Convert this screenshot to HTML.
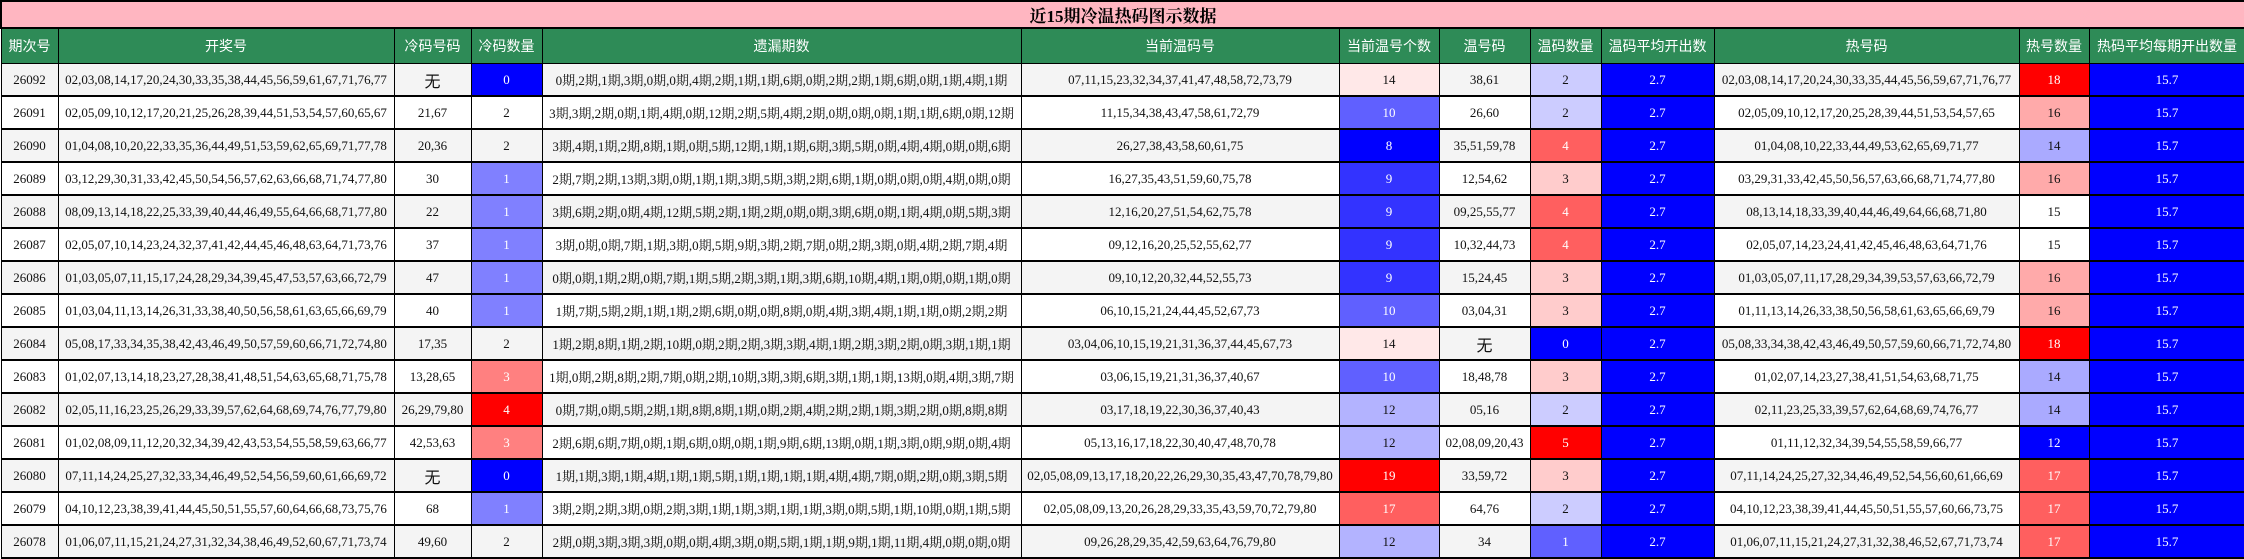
<!DOCTYPE html>
<html><head><meta charset="utf-8">
<style>
html,body{margin:0;padding:0;background:#fff;}
body{width:2244px;height:558px;overflow:hidden;}
table{border-collapse:collapse;table-layout:fixed;width:2244px;}
td{border:1px solid #000;text-align:center;vertical-align:middle;padding:0;white-space:nowrap;overflow:hidden;
 font-family:"Liberation Serif","Noto Serif CJK SC","Noto Sans CJK SC",serif;font-size:13px;color:#111;}
tr.t td{height:24px;background:#FFB6C1;border:2px solid #000;font-weight:bold;font-size:17px;color:#000;}
tr.h td{height:34px;background:#2E8B57;color:#fff;font-family:"Noto Sans CJK SC","Liberation Sans",sans-serif;font-size:14px;}
tr.r td{height:31px;border-bottom:2px solid #000;}
tr.r:nth-of-type(odd) td{background:#f4f4f4;}
tr.r:nth-of-type(even) td{background:#fff;}
tr.r td.w{font-family:"Noto Sans CJK SC",sans-serif;font-size:16px;}
tr.r td.b0{background:#0000ff;color:#fff;}
tr.r td.b1{background:#8080ff;color:#fff;}
tr.r td.b2{background:#6060ff;color:#fff;}
tr.r td.b3{background:#3333ff;color:#fff;}
tr.r td.l1{background:#ccccff;}
tr.r td.l2{background:#b3b3ff;}
tr.r td.l3{background:#aaaaff;}
tr.r td.p0{background:#ffe8e8;}
tr.r td.p1{background:#ffcccc;}
tr.r td.p2{background:#ffaaaa;}
tr.r td.p3{background:#ff8080;color:#fff;}
tr.r td.p4{background:#ff5f5f;color:#fff;}
tr.r td.rd{background:#ff0000;color:#fff;}
</style></head><body>
<table>
<colgroup>
<col style="width:57px"><col style="width:336px"><col style="width:77px"><col style="width:71px"><col style="width:479px"><col style="width:318px"><col style="width:100px"><col style="width:91px"><col style="width:71px"><col style="width:113px"><col style="width:305px"><col style="width:70px"><col style="width:156px">
</colgroup>
<tr class="t"><td colspan="13">近15期冷温热码图示数据</td></tr>
<tr class="h"><td>期次号</td><td>开奖号</td><td>冷码号码</td><td>冷码数量</td><td>遗漏期数</td><td>当前温码号</td><td>当前温号个数</td><td>温号码</td><td>温码数量</td><td>温码平均开出数</td><td>热号码</td><td>热号数量</td><td>热码平均每期开出数量</td></tr>
<tr class="r"><td>26092</td><td>02,03,08,14,17,20,24,30,33,35,38,44,45,56,59,61,67,71,76,77</td><td class="w">无</td><td class="b0">0</td><td>0期,2期,1期,3期,0期,0期,4期,2期,1期,1期,6期,0期,2期,2期,1期,6期,0期,1期,4期,1期</td><td>07,11,15,23,32,34,37,41,47,48,58,72,73,79</td><td class="p0">14</td><td>38,61</td><td class="l1">2</td><td class="b0">2.7</td><td>02,03,08,14,17,20,24,30,33,35,44,45,56,59,67,71,76,77</td><td class="rd">18</td><td class="b0">15.7</td></tr>
<tr class="r"><td>26091</td><td>02,05,09,10,12,17,20,21,25,26,28,39,44,51,53,54,57,60,65,67</td><td>21,67</td><td>2</td><td>3期,3期,2期,0期,1期,4期,0期,12期,2期,5期,4期,2期,0期,0期,0期,1期,1期,6期,0期,12期</td><td>11,15,34,38,43,47,58,61,72,79</td><td class="b2">10</td><td>26,60</td><td class="l1">2</td><td class="b0">2.7</td><td>02,05,09,10,12,17,20,25,28,39,44,51,53,54,57,65</td><td class="p2">16</td><td class="b0">15.7</td></tr>
<tr class="r"><td>26090</td><td>01,04,08,10,20,22,33,35,36,44,49,51,53,59,62,65,69,71,77,78</td><td>20,36</td><td>2</td><td>3期,4期,1期,2期,8期,1期,0期,5期,12期,1期,1期,6期,3期,5期,0期,4期,4期,0期,0期,6期</td><td>26,27,38,43,58,60,61,75</td><td class="b0">8</td><td>35,51,59,78</td><td class="p4">4</td><td class="b0">2.7</td><td>01,04,08,10,22,33,44,49,53,62,65,69,71,77</td><td class="l3">14</td><td class="b0">15.7</td></tr>
<tr class="r"><td>26089</td><td>03,12,29,30,31,33,42,45,50,54,56,57,62,63,66,68,71,74,77,80</td><td>30</td><td class="b1">1</td><td>2期,7期,2期,13期,3期,0期,1期,1期,3期,5期,3期,2期,6期,1期,0期,0期,0期,4期,0期,0期</td><td>16,27,35,43,51,59,60,75,78</td><td class="b3">9</td><td>12,54,62</td><td class="p1">3</td><td class="b0">2.7</td><td>03,29,31,33,42,45,50,56,57,63,66,68,71,74,77,80</td><td class="p2">16</td><td class="b0">15.7</td></tr>
<tr class="r"><td>26088</td><td>08,09,13,14,18,22,25,33,39,40,44,46,49,55,64,66,68,71,77,80</td><td>22</td><td class="b1">1</td><td>3期,6期,2期,0期,4期,12期,5期,2期,1期,2期,0期,0期,3期,6期,0期,1期,4期,0期,5期,3期</td><td>12,16,20,27,51,54,62,75,78</td><td class="b3">9</td><td>09,25,55,77</td><td class="p4">4</td><td class="b0">2.7</td><td>08,13,14,18,33,39,40,44,46,49,64,66,68,71,80</td><td style="background:#fff">15</td><td class="b0">15.7</td></tr>
<tr class="r"><td>26087</td><td>02,05,07,10,14,23,24,32,37,41,42,44,45,46,48,63,64,71,73,76</td><td>37</td><td class="b1">1</td><td>3期,0期,0期,7期,1期,3期,0期,5期,9期,3期,2期,7期,0期,2期,3期,0期,4期,2期,7期,4期</td><td>09,12,16,20,25,52,55,62,77</td><td class="b3">9</td><td>10,32,44,73</td><td class="p4">4</td><td class="b0">2.7</td><td>02,05,07,14,23,24,41,42,45,46,48,63,64,71,76</td><td>15</td><td class="b0">15.7</td></tr>
<tr class="r"><td>26086</td><td>01,03,05,07,11,15,17,24,28,29,34,39,45,47,53,57,63,66,72,79</td><td>47</td><td class="b1">1</td><td>0期,0期,1期,2期,0期,7期,1期,5期,2期,3期,1期,3期,6期,10期,4期,1期,0期,0期,1期,0期</td><td>09,10,12,20,32,44,52,55,73</td><td class="b3">9</td><td>15,24,45</td><td class="p1">3</td><td class="b0">2.7</td><td>01,03,05,07,11,17,28,29,34,39,53,57,63,66,72,79</td><td class="p2">16</td><td class="b0">15.7</td></tr>
<tr class="r"><td>26085</td><td>01,03,04,11,13,14,26,31,33,38,40,50,56,58,61,63,65,66,69,79</td><td>40</td><td class="b1">1</td><td>1期,7期,5期,2期,1期,1期,2期,6期,0期,0期,8期,0期,4期,3期,4期,1期,1期,0期,2期,2期</td><td>06,10,15,21,24,44,45,52,67,73</td><td class="b2">10</td><td>03,04,31</td><td class="p1">3</td><td class="b0">2.7</td><td>01,11,13,14,26,33,38,50,56,58,61,63,65,66,69,79</td><td class="p2">16</td><td class="b0">15.7</td></tr>
<tr class="r"><td>26084</td><td>05,08,17,33,34,35,38,42,43,46,49,50,57,59,60,66,71,72,74,80</td><td>17,35</td><td>2</td><td>1期,2期,8期,1期,2期,10期,0期,2期,2期,3期,3期,4期,1期,2期,3期,2期,0期,3期,1期,1期</td><td>03,04,06,10,15,19,21,31,36,37,44,45,67,73</td><td class="p0">14</td><td class="w">无</td><td class="b0">0</td><td class="b0">2.7</td><td>05,08,33,34,38,42,43,46,49,50,57,59,60,66,71,72,74,80</td><td class="rd">18</td><td class="b0">15.7</td></tr>
<tr class="r"><td>26083</td><td>01,02,07,13,14,18,23,27,28,38,41,48,51,54,63,65,68,71,75,78</td><td>13,28,65</td><td class="p3">3</td><td>1期,0期,2期,8期,2期,7期,0期,2期,10期,3期,3期,6期,3期,1期,1期,13期,0期,4期,3期,7期</td><td>03,06,15,19,21,31,36,37,40,67</td><td class="b2">10</td><td>18,48,78</td><td class="p1">3</td><td class="b0">2.7</td><td>01,02,07,14,23,27,38,41,51,54,63,68,71,75</td><td class="l3">14</td><td class="b0">15.7</td></tr>
<tr class="r"><td>26082</td><td>02,05,11,16,23,25,26,29,33,39,57,62,64,68,69,74,76,77,79,80</td><td>26,29,79,80</td><td class="rd">4</td><td>0期,7期,0期,5期,2期,1期,8期,8期,1期,0期,2期,4期,2期,2期,1期,3期,2期,0期,8期,8期</td><td>03,17,18,19,22,30,36,37,40,43</td><td class="l2">12</td><td>05,16</td><td class="l1">2</td><td class="b0">2.7</td><td>02,11,23,25,33,39,57,62,64,68,69,74,76,77</td><td class="l3">14</td><td class="b0">15.7</td></tr>
<tr class="r"><td>26081</td><td>01,02,08,09,11,12,20,32,34,39,42,43,53,54,55,58,59,63,66,77</td><td>42,53,63</td><td class="p3">3</td><td>2期,6期,6期,7期,0期,1期,6期,0期,0期,1期,9期,6期,13期,0期,1期,3期,0期,9期,0期,4期</td><td>05,13,16,17,18,22,30,40,47,48,70,78</td><td class="l2">12</td><td>02,08,09,20,43</td><td class="rd">5</td><td class="b0">2.7</td><td>01,11,12,32,34,39,54,55,58,59,66,77</td><td class="b0">12</td><td class="b0">15.7</td></tr>
<tr class="r"><td>26080</td><td>07,11,14,24,25,27,32,33,34,46,49,52,54,56,59,60,61,66,69,72</td><td class="w">无</td><td class="b0">0</td><td>1期,1期,3期,1期,4期,1期,1期,5期,1期,1期,1期,1期,4期,4期,7期,0期,2期,0期,3期,5期</td><td>02,05,08,09,13,17,18,20,22,26,29,30,35,43,47,70,78,79,80</td><td class="rd">19</td><td>33,59,72</td><td class="p1">3</td><td class="b0">2.7</td><td>07,11,14,24,25,27,32,34,46,49,52,54,56,60,61,66,69</td><td class="p4">17</td><td class="b0">15.7</td></tr>
<tr class="r"><td>26079</td><td>04,10,12,23,38,39,41,44,45,50,51,55,57,60,64,66,68,73,75,76</td><td>68</td><td class="b1">1</td><td>3期,2期,2期,3期,0期,2期,3期,1期,1期,3期,1期,1期,3期,0期,5期,1期,10期,0期,1期,5期</td><td>02,05,08,09,13,20,26,28,29,33,35,43,59,70,72,79,80</td><td class="p4">17</td><td>64,76</td><td class="l1">2</td><td class="b0">2.7</td><td>04,10,12,23,38,39,41,44,45,50,51,55,57,60,66,73,75</td><td class="p4">17</td><td class="b0">15.7</td></tr>
<tr class="r"><td>26078</td><td>01,06,07,11,15,21,24,27,31,32,34,38,46,49,52,60,67,71,73,74</td><td>49,60</td><td>2</td><td>2期,0期,3期,3期,3期,0期,0期,4期,3期,0期,5期,1期,1期,9期,1期,11期,4期,0期,0期,0期</td><td>09,26,28,29,35,42,59,63,64,76,79,80</td><td class="l2">12</td><td>34</td><td class="b2">1</td><td class="b0">2.7</td><td>01,06,07,11,15,21,24,27,31,32,38,46,52,67,71,73,74</td><td class="p4">17</td><td class="b0">15.7</td></tr>
</table>
</body></html>
